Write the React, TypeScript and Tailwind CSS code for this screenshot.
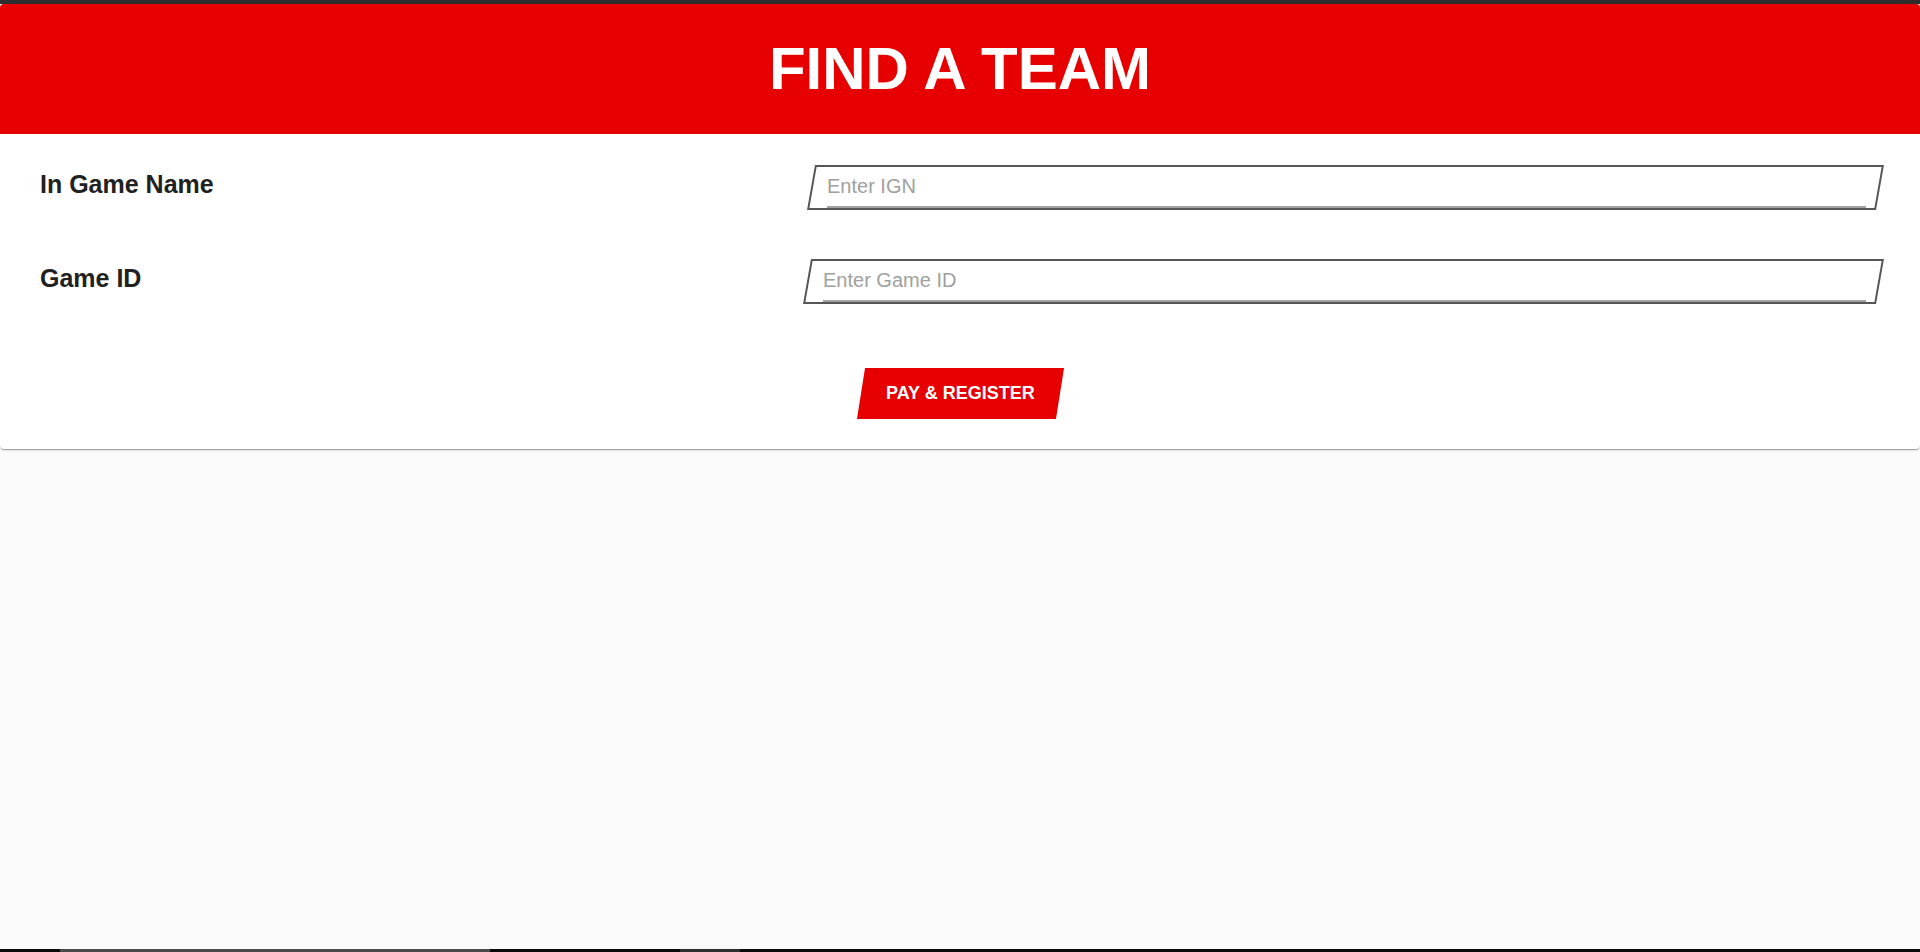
import { useState } from 'react';

const font = { fontFamily: '"Liberation Sans", Arial, Helvetica, sans-serif' };

const SkewInput = ({ placeholder, width }: { placeholder: string; width: string }) => {
  const [value, setValue] = useState('');
  return (
    <div className={`${width} h-[45px] -skew-x-[10deg] border-2 border-[#565656] bg-white`}>
      <div className="skew-x-[10deg] h-full pl-[14px] pr-[12px]">
        <input
          value={value}
          onChange={(e) => setValue(e.target.value)}
          placeholder={placeholder}
          className="w-full h-full bg-transparent outline-none border-b-2 border-[#a3a3a3] text-[20px] text-[#222] placeholder:text-[#a0a0a0]"
          style={font}
        />
      </div>
    </div>
  );
};

export default function App() {
  return (
    <div className="min-h-screen flex flex-col bg-[#fafafa]" style={font}>
      <div className="h-[4px] bg-[#2e2e2e]" />
      <div className="flex-1">
        <div className="bg-white rounded-[4px] overflow-hidden shadow-[0_2px_1px_-1px_rgba(0,0,0,0.2),0_1px_1px_0_rgba(0,0,0,0.14),0_1px_3px_0_rgba(0,0,0,0.12)]">
          <div className="h-[130px] bg-[#e60000] flex items-center justify-center">
            <h1 className="text-[60px] font-bold text-white">FIND A TEAM</h1>
          </div>
          <div className="pl-[40px] pr-[40px] pt-[31px] pb-[30px]">
            <div className="flex items-center justify-between h-[45px]">
              <label className="text-[25px] font-bold text-[#212121] mb-[6px]">In Game Name</label>
              <SkewInput placeholder="Enter IGN" width="w-[1069px]" />
            </div>
            <div className="flex items-center justify-between h-[45px] mt-[49px]">
              <label className="text-[25px] font-bold text-[#212121] mb-[6px]">Game ID</label>
              <SkewInput placeholder="Enter Game ID" width="w-[1073px]" />
            </div>
            <div className="flex justify-center mt-[64px]">
              <button className="w-[199px] h-[51px] -skew-x-[9deg] bg-[#e60000] flex items-center justify-center">
                <span className="skew-x-[9deg] text-[18px] font-bold text-white uppercase">Pay &amp; Register</span>
              </button>
            </div>
          </div>
        </div>
      </div>
      <div className="h-[3px] bg-[#0a0a0a] flex">
        <div className="ml-[60px] w-[430px] bg-[#4a4a4a]" />
        <div className="ml-[190px] w-[60px] bg-[#2f2f2f]" />
      </div>
    </div>
  );
}
